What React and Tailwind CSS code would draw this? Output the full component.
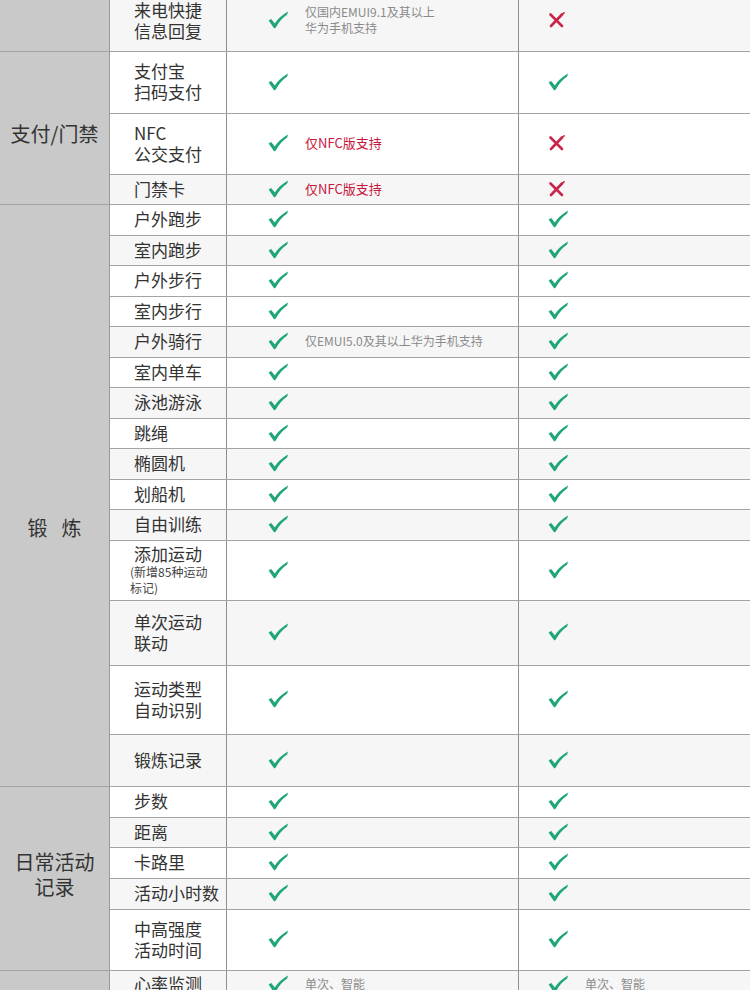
import React from "react";

const font = { fontFamily: '"Noto Sans CJK SC", "Noto Sans", sans-serif' };

function Check() {
  return (
    <svg width="21" height="18" viewBox="0 0 21 18" className="shrink-0">
      <path
        d="M0.6 9.6 L3.2 8.1 L6.8 12.4 C9.8 8.2 13.4 4.6 17.6 2 L20 0.6 L19.2 3.4 C14.8 6.2 10.8 10.6 7.8 16.6 L6.2 17.6 Z"
        fill="#1fa57b"
      />
    </svg>
  );
}

function Cross() {
  return (
    <svg width="17" height="16" viewBox="0 0 17 16" className="shrink-0">
      <path d="M2.5 2.5 L14 14" stroke="#c8264a" strokeWidth="2.6" strokeLinecap="round" />
      <path d="M14 2.5 L3 14" stroke="#c8264a" strokeWidth="2.6" strokeLinecap="round" />
      <path d="M13 3.5 L16 0.8" stroke="#c8264a" strokeWidth="1.6" strokeLinecap="round" />
    </svg>
  );
}

function Mark({ ok }) {
  return ok ? <Check /> : <Cross />;
}

function Row({ r, last }) {
  return (
    <div
      className={`flex ${last ? "" : "border-b"} border-[#a3a3a3] ${r.grey ? "bg-[#f6f6f6]" : "bg-white"}`}
      style={{ height: last ? r.h - 1 : r.h }}
    >
      <div className="w-[117px] shrink-0 border-r border-[#8f8f8f] flex flex-col justify-center pl-6 pb-[3px] text-[17px] leading-[21px] text-[#333]">
        {r.name.map((t) => (
          <span key={t}>{t}</span>
        ))}
        {r.sub && (
          <div className="text-[12px] leading-[16px] text-[#444] -ml-1">
            {r.sub.map((t) => (
              <div key={t}>{t}</div>
            ))}
          </div>
        )}
      </div>
      <div className="w-[292px] shrink-0 border-r border-[#8f8f8f] flex items-center pl-[41px] pb-[2px] gap-[16px]">
        <Mark ok={r.c3 !== false} />
        {r.note && (
          <div className="text-[12px] leading-[16px] text-[#8a8a8a]">
            {r.note.map((t) => (
              <div key={t}>{t}</div>
            ))}
          </div>
        )}
        {r.red && <span className="text-[13px] text-[#c8173c]">{r.red}</span>}
      </div>
      <div className="flex-1 flex items-center pl-[29px] pb-[2px] gap-[16px]">
        <Mark ok={r.c4 !== false} />
        {r.note4 && (
          <div className="text-[12px] leading-[16px] text-[#8a8a8a]">
            {r.note4.map((t) => (
              <div key={t}>{t}</div>
            ))}
          </div>
        )}
      </div>
    </div>
  );
}

function Section({ label, rows, labelClass = "" }) {
  return (
    <div className="flex border-b border-[#a3a3a3]">
      <div
        className={`w-[110px] shrink-0 bg-[#c9c9c9] border-r border-[#9a9a9a] flex flex-col items-center justify-center text-[20px] leading-[25px] text-[#333] ${labelClass}`}
      >
        {label}
      </div>
      <div className="flex-1 flex flex-col">
        {rows.map((r, i) => (
          <Row key={r.name.join("")} r={r} last={i === rows.length - 1} />
        ))}
      </div>
    </div>
  );
}

const notify = [
  { h: 60, name: ["消息提醒"], grey: false },
  { h: 61, name: ["来电快捷", "信息回复"], grey: true, note: ["仅国内EMUI9.1及其以上", "华为手机支持"], c4: false },
];

const pay = [
  { h: 62, name: ["支付宝", "扫码支付"] },
  { h: 61, name: ["NFC", "公交支付"], red: "仅NFC版支持", c4: false },
  { h: 30, name: ["门禁卡"], grey: true, red: "仅NFC版支持", c4: false },
];

const sport = [
  { h: 31, name: ["户外跑步"] },
  { h: 30, name: ["室内跑步"], grey: true },
  { h: 31, name: ["户外步行"] },
  { h: 30, name: ["室内步行"] },
  { h: 31, name: ["户外骑行"], grey: true, note: ["仅EMUI5.0及其以上华为手机支持"] },
  { h: 30, name: ["室内单车"] },
  { h: 31, name: ["泳池游泳"], grey: true },
  { h: 30, name: ["跳绳"] },
  { h: 31, name: ["椭圆机"], grey: true },
  { h: 30, name: ["划船机"] },
  { h: 31, name: ["自由训练"], grey: true },
  { h: 60, name: ["添加运动"], sub: ["(新增85种运动", "标记)"] },
  { h: 65, name: ["单次运动", "联动"], grey: true },
  { h: 69, name: ["运动类型", "自动识别"] },
  { h: 52, name: ["锻炼记录"], grey: true },
];

const daily = [
  { h: 31, name: ["步数"] },
  { h: 30, name: ["距离"], grey: true },
  { h: 31, name: ["卡路里"] },
  { h: 31, name: ["活动小时数"], grey: true },
  { h: 61, name: ["中高强度", "活动时间"] },
];

const health = [
  { h: 29, name: ["心率监测"], grey: true, note: ["单次、智能"], note4: ["单次、智能"] },
  { h: 31, name: ["血氧检测"] },
];

export default function App() {
  return (
    <div className="w-[750px] h-[990px] overflow-hidden bg-white" style={font}>
      <div className="-mt-[69px]">
        <Section label="消息通知" rows={notify} labelClass="pb-[8px]" />
        <Section label="支付/门禁" rows={pay} labelClass="pt-[10px]" />
        <Section
          label={
            <div className="flex gap-[14px]">
              <span>锻</span>
              <span>炼</span>
            </div>
          }
          rows={sport}
          labelClass="pt-[63px]"
        />
        <Section
          label={
            <>
              <span>日常活动</span>
              <span>记录</span>
            </>
          }
          rows={daily}
          labelClass="pb-[9px]"
        />
        <Section label="健康管理" rows={health} />
      </div>
    </div>
  );
}
